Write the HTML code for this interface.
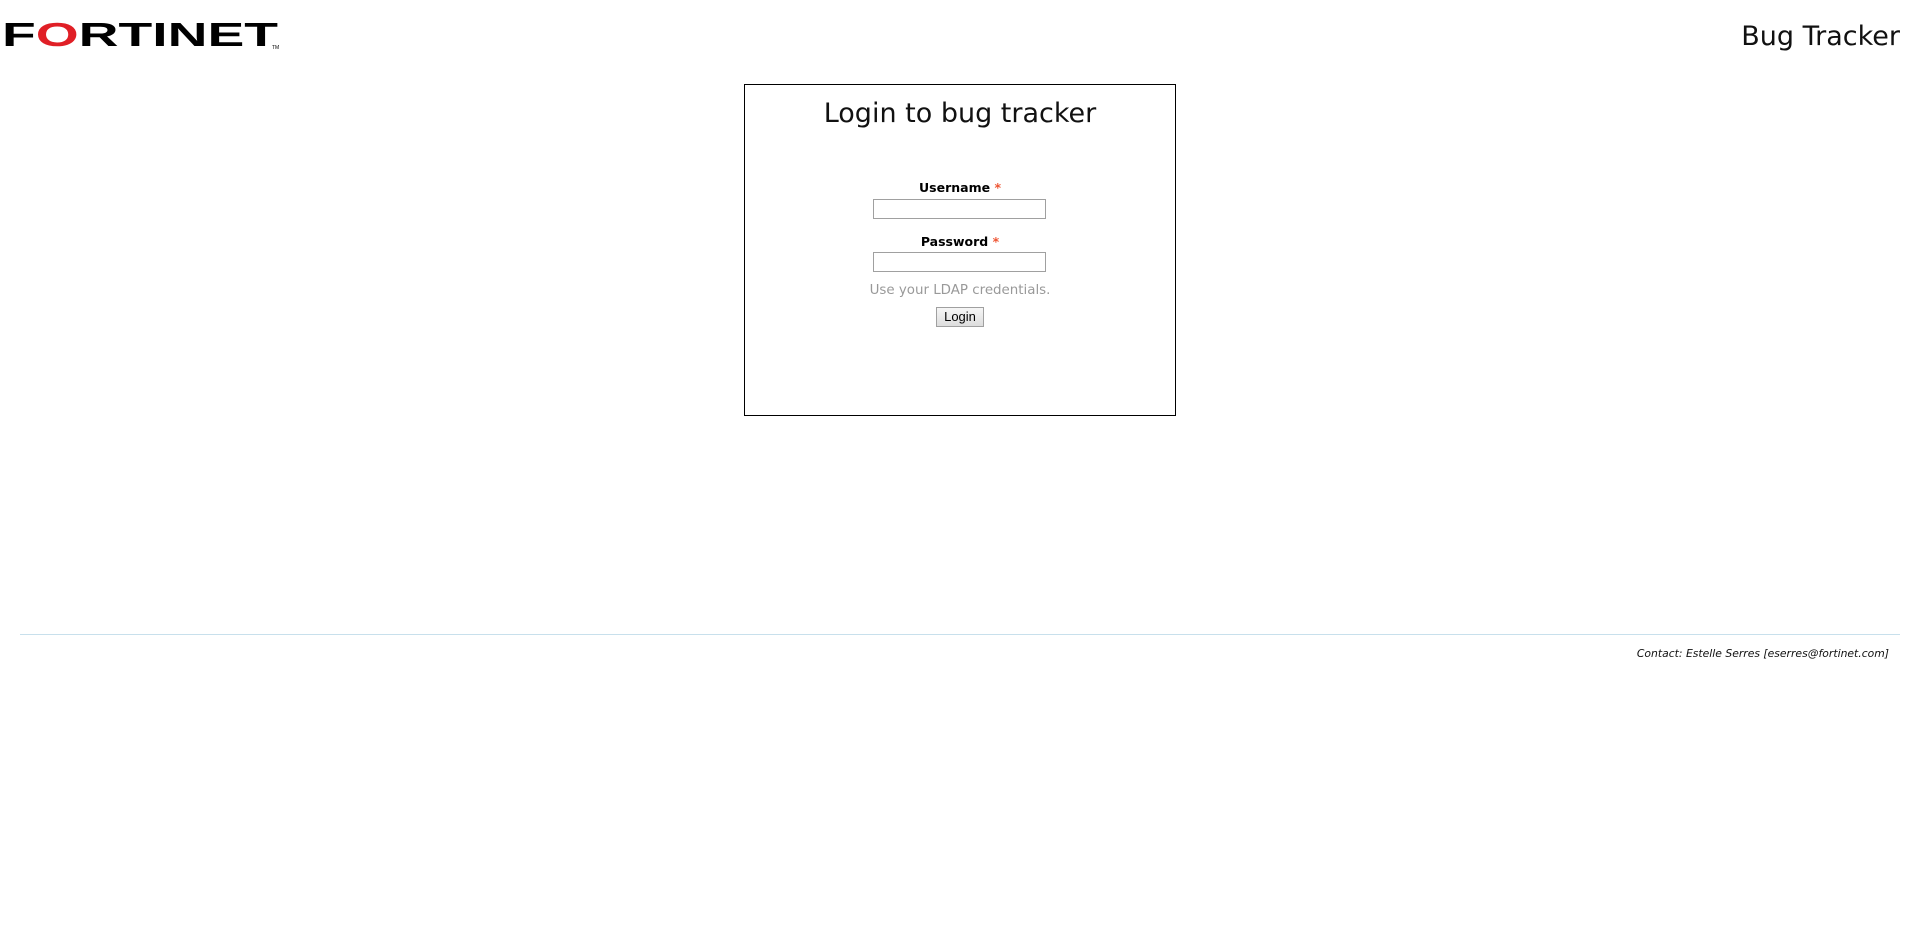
<!DOCTYPE html>
<html><head><meta charset="utf-8"><style>
html,body{margin:0;padding:0;background:#fff;width:1920px;height:935px;overflow:hidden;font-family:"DejaVu Sans",Verdana,sans-serif;}
.abs{position:absolute}
#bt{right:20px;top:21px;font-size:27px;color:#111;white-space:nowrap}
#box{left:744px;top:84px;width:430px;height:330px;border:1px solid #000}
#title{left:744px;width:432px;top:98px;text-align:center;font-size:27px;color:#111}
.lbl{left:744px;width:432px;text-align:center;font-size:12.5px;font-weight:bold;color:#000}
.lbl span{color:#e53}
.inp{left:873px;width:171px;height:18px;border:1px solid #a0a0a0;background:#fff}
#hint{left:744px;width:432px;top:283px;text-align:center;font-size:13.4px;color:#999}
#btn{left:936px;top:307px;width:46px;height:18px;border:1px solid #a0a0a0;background:linear-gradient(#f6f6f6,#ddd);font-family:"Liberation Sans",Arial,sans-serif;font-size:13px;text-align:center;line-height:18px;color:#000}
#line{left:20px;width:1880px;top:634px;height:1px;background:#c8e0ec}
#contact{right:31px;top:647px;font-size:10.8px;font-style:italic;color:#111;white-space:nowrap}
</style></head><body>
<svg class="abs" style="left:0;top:18px" width="300" height="34">
<text x="2" y="28" font-family="Liberation Sans,Arial,sans-serif" font-weight="bold" font-size="33" textLength="276" lengthAdjust="spacingAndGlyphs" fill="#000">F<tspan fill="#e01f26">O</tspan>RTINET</text>
<text x="272" y="31" font-family="Liberation Sans,sans-serif" font-size="5" fill="#000">TM</text>
</svg>
<div id="bt" class="abs">Bug Tracker</div>
<div id="box" class="abs"></div>
<div id="title" class="abs">Login to bug tracker</div>
<div class="abs lbl" style="top:180px">Username <span>*</span></div>
<div class="abs inp" style="top:199px"></div>
<div class="abs lbl" style="top:234px">Password <span>*</span></div>
<div class="abs inp" style="top:252px"></div>
<div id="hint" class="abs">Use your LDAP credentials.</div>
<div id="btn" class="abs">Login</div>
<div id="line" class="abs"></div>
<div id="contact" class="abs">Contact: Estelle Serres [eserres@fortinet.com]</div>
</body></html>
